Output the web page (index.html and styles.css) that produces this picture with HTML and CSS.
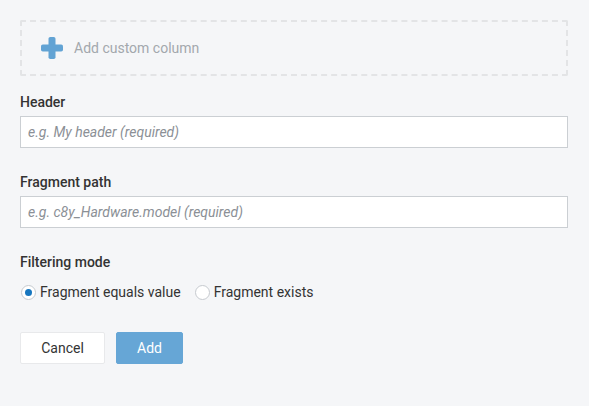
FILE: index.html
```html
<!DOCTYPE html>
<html>
<head>
<meta charset="utf-8">
<link rel="stylesheet" href="styles.css">
</head>
<body>
<div class="page">
  <div class="add-box">
    <svg class="plus" width="22" height="22" viewBox="0 0 22 22"><rect x="0" y="7.5" width="22" height="7" rx="1.8" fill="#62a3d4"/><rect x="7.5" y="0" width="7" height="22" rx="1.8" fill="#62a3d4"/></svg>
    <span class="add-text">Add custom column</span>
  </div>
  <div class="group">
    <label class="label">Header</label>
    <input class="input" type="text" placeholder="e.g. My header (required)">
  </div>
  <div class="group">
    <label class="label">Fragment path</label>
    <input class="input" type="text" placeholder="e.g. c8y_Hardware.model (required)">
  </div>
  <div class="group">
    <label class="label">Filtering mode</label>
    <div class="radios">
      <label class="radio"><span class="circle checked"></span>Fragment equals value</label>
      <label class="radio"><span class="circle"></span>Fragment exists</label>
    </div>
  </div>
  <div class="buttons">
    <button class="btn btn-default">Cancel</button>
    <button class="btn btn-primary">Add</button>
  </div>
</div>
</body>
</html>
```
FILE: styles.css
```css
html, body {
  margin: 0;
  padding: 0;
  background: #f5f6f8;
  font-family: Roboto, "Liberation Sans", sans-serif;
  font-size: 14px;
  line-height: 20px;
  color: #333;
}
.page {
  padding: 20px 21px 20px 20px;
}
.add-box {
  height: 52px;
  border: 2px dashed #e3e4e6;
  border-radius: 2px;
  display: flex;
  align-items: center;
  padding-left: 19px;
  gap: 11px;
}
.plus { display: block; }
.add-text {
  color: #a3a8ad;
  font-size: 14px;
}
.group {
  margin-top: 16px;
}
.group + .group {
  margin-top: 24px;
}
.label {
  display: block;
  font-weight: 500;
  color: #333;
  margin-bottom: 4px;
}
.input {
  display: block;
  box-sizing: border-box;
  width: 100%;
  height: 32px;
  border: 1px solid #cbcfd3;
  border-radius: 0;
  background: #fff;
  padding: 0 7px;
  font-family: Roboto, "Liberation Sans", sans-serif;
  font-size: 14px;
  outline: none;
}
.input::placeholder {
  color: #8b9096;
  font-style: italic;
}
.radios {
  display: flex;
  gap: 13px;
  margin-top: 10px;
}
.radio {
  display: flex;
  align-items: center;
  gap: 4px;
  color: #333;
  padding-left: 1px;
}
.circle {
  box-sizing: border-box;
  width: 15px;
  height: 15px;
  border-radius: 50%;
  border: 1px solid #c6cacf;
  background: #fff;
  position: relative;
}
.circle.checked::after {
  content: "";
  position: absolute;
  left: 3px;
  top: 3px;
  width: 7px;
  height: 7px;
  border-radius: 50%;
  background: #1776bf;
}
.buttons {
  display: flex;
  gap: 11px;
  margin-top: 30px;
}
.btn {
  height: 32px;
  border-radius: 2px;
  font-family: Roboto, "Liberation Sans", sans-serif;
  font-size: 14px;
  padding: 0;
  cursor: pointer;
}
.btn-default {
  width: 85px;
  background: #fff;
  border: 1px solid #e8e9eb;
  color: #333;
}
.btn-primary {
  width: 67px;
  background: #66a6d6;
  border: 1px solid #66a6d6;
  color: #fff;
}
```
